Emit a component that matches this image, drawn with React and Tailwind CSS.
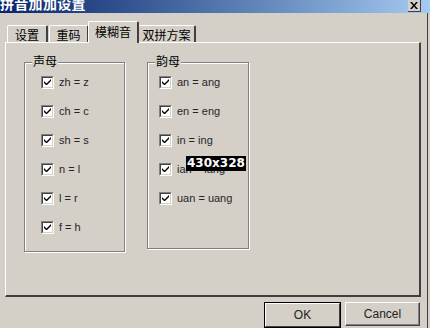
const cjk = { fontFamily: '"Noto Sans CJK SC", "Liberation Sans", sans-serif' };

function CheckBox() {
  return (
    <div className="w-[13px] h-[13px] border border-t-[#808080] border-l-[#808080] border-r-white border-b-white shrink-0">
      <div className="w-full h-full bg-white border border-t-[#404040] border-l-[#404040] border-r-[#d4d0c8] border-b-[#d4d0c8] flex items-center justify-center">
        <svg width="7" height="7" viewBox="0 0 7 7">
          <path d="M0 2 L0 4 L2 6 L3 6 L7 2 L7 0 L2.5 4.5 Z" fill="#000" />
        </svg>
      </div>
    </div>
  );
}

function Group({ label, items, width, height, boxLeft }) {
  return (
    <div
      className="relative border border-[#808080] shadow-[inset_1px_1px_0_#fff,1px_1px_0_#fff]"
      style={{ width, height }}
    >
      <div
        className="absolute left-[7px] -top-[10px] bg-[#d4d0c8] px-[1px] text-[12px] leading-[16px] text-black"
        style={cjk}
      >
        {label}
      </div>
      <div className="flex flex-col gap-[16px] pt-[13px]" style={{ paddingLeft: boxLeft }}>
        {items.map((t) => (
          <div key={t} className="flex items-center gap-[5px] h-[13px]">
            <CheckBox />
            <span className="text-[11px] text-[#262626] leading-none whitespace-nowrap">{t}</span>
          </div>
        ))}
      </div>
    </div>
  );
}

function Tab({ label, active, width }) {
  if (active) {
    return (
      <div
        className="relative z-10 -mx-[2px] h-[22px] -mb-[1px] bg-[#d4d0c8] border-l border-t border-white border-r-2 border-r-[#404040] rounded-t-[2px] flex justify-center pt-[2px] text-[12px] leading-[16px] text-black"
        style={{ ...cjk, width }}
      >
        {label}
      </div>
    );
  }
  return (
    <div
      className="h-[17px] bg-[#d4d0c8] border-l border-t border-white border-r-2 border-r-[#404040] rounded-t-[2px] flex justify-center pt-[1px] text-[12px] leading-[16px] text-black"
      style={{ ...cjk, width }}
    >
      {label}
    </div>
  );
}

export default function App() {
  return (
    <div
      className="w-[430px] h-[328px] bg-[#d4d0c8] overflow-hidden flex flex-col relative"
      style={{ fontFamily: '"Liberation Sans", Arial, sans-serif' }}
    >
      {/* TITLE BAR */}
      <div className="h-[13px] shrink-0 bg-gradient-to-r from-[#0a246a] to-[#a6caf0] flex items-start justify-between overflow-hidden">
        <span
          className="text-white font-bold text-[14px] leading-[14px] -mt-[4px] tracking-[0.3px]"
          style={cjk}
        >
          拼音加加设置
        </span>
        <div className="mr-[9px] w-[13px] h-[12px] bg-[#d4d0c8] border-r border-b border-[#404040] flex items-center justify-center">
          <svg width="8" height="7" viewBox="0 0 8 7">
            <path d="M0 0 L2 0 L4 2.5 L6 0 L8 0 L5 3.5 L8 7 L6 7 L4 4.5 L2 7 L0 7 L3 3.5 Z" fill="#000" />
          </svg>
        </div>
      </div>

      {/* BODY */}
      <div className="flex-1 pr-[2px] flex flex-col">
        <div className="flex-1 border-r border-[#404040] flex flex-col pl-[5px] pr-[6px]">
          {/* TABS */}
          <div className="flex items-end h-[29px] pl-[2px] gap-[1px]">
            <Tab label="设置" width={41} />
            <Tab label="重码" width={40} />
            <Tab label="模糊音" width={51} active />
            <Tab label="双拼方案" width={58} />
          </div>

          {/* PANEL */}
          <div className="h-[255px] border-l border-t border-white border-r-2 border-r-[#404040] border-b-2 border-b-[#404040] flex items-start gap-[22px] pl-[18px] pt-[19px]">
            <Group
              label="声母"
              width={101}
              height={190}
              boxLeft={16}
              items={["zh = z", "ch = c", "sh = s", "n = l", "l = r", "f = h"]}
            />
            <Group
              label="韵母"
              width={102}
              height={187}
              boxLeft={11}
              items={["an = ang", "en = eng", "in = ing", "ian = iang", "uan = uang"]}
            />
          </div>

          {/* BUTTONS */}
          <div className="flex justify-end gap-[4px] mt-[5px] pr-[1px]">
            <button className="w-[77px] h-[26px] border border-black bg-[#d4d0c8] p-0">
              <div className="w-full h-full border border-t-white border-l-white border-r-[#404040] border-b-[#404040] flex items-center justify-center text-[12px] text-[#222]">
                OK
              </div>
            </button>
            <button className="w-[75px] h-[24px] border border-t-white border-l-white border-r-[#404040] border-b-[#404040] bg-[#d4d0c8] flex items-center justify-center text-[12px] text-[#222] shadow-[inset_-1px_-1px_0_#808080]">
              Cancel
            </button>
          </div>
        </div>
      </div>

      {/* SIZE BADGE */}
      <div
        className="absolute left-[186px] top-[156px] bg-black text-white font-bold text-[12px] leading-[15px] px-[1px]"
        style={{ fontFamily: '"DejaVu Sans", sans-serif' }}
      >
        430x328
      </div>
    </div>
  );
}
